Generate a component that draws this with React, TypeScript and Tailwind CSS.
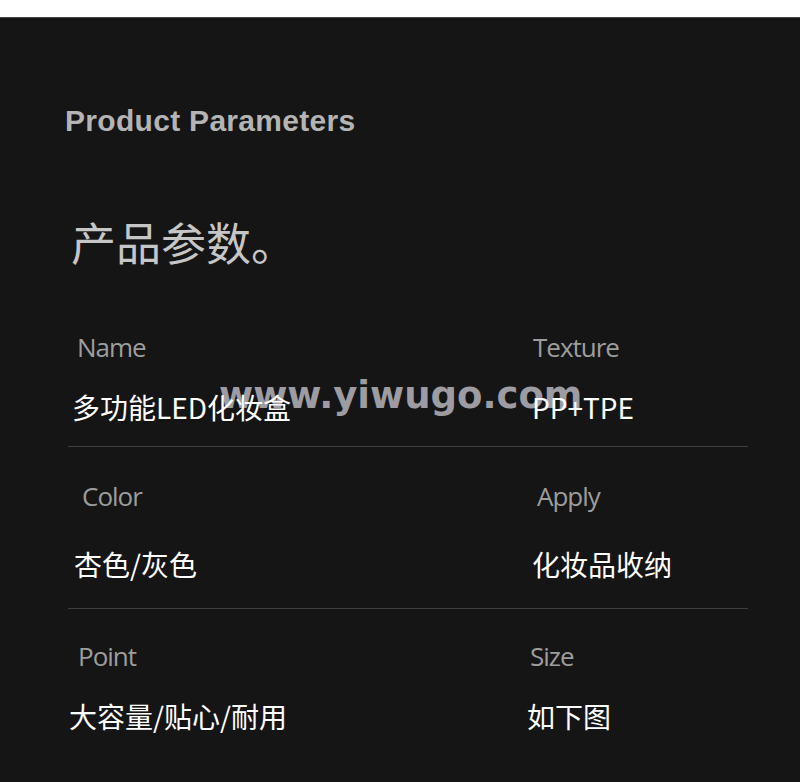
import React from "react";

const labelFont = { fontFamily: '"Open Sans", "Liberation Sans", sans-serif' };
const cjkFont = { fontFamily: '"Noto Sans CJK SC", "Noto Sans", sans-serif' };

type Cell = { label: string; value: string; lp: string; vp: string };

function Row({
  left,
  right,
  gapClass,
}: {
  left: Cell;
  right: Cell;
  gapClass: string;
}) {
  return (
    <div className="grid grid-cols-[459px_1fr]">
      <div className={`text-[26px] leading-none tracking-[-1px] text-[#9d9d9d] ${left.lp}`} style={labelFont}>
        {left.label}
      </div>
      <div className={`text-[26px] leading-none tracking-[-1px] text-[#9d9d9d] ${right.lp}`} style={labelFont}>
        {right.label}
      </div>
      <div
        className={`relative z-10 ${gapClass} text-[28px] leading-none text-white whitespace-nowrap ${left.vp}`}
        style={cjkFont}
      >
        {left.value}
      </div>
      <div
        className={`relative z-10 ${gapClass} text-[28px] leading-none text-white whitespace-nowrap ${right.vp}`}
        style={cjkFont}
      >
        {right.value}
      </div>
    </div>
  );
}

export default function App() {
  return (
    <div className="relative w-[800px] h-[782px] overflow-hidden bg-white flex flex-col">
      <div className="h-[17px] bg-white shrink-0" />
      <div className="flex-1 bg-[#151515] border-t border-[#474747] pt-[88px] pl-[65px]">
        <div
          className="text-[30px] leading-none font-bold text-[#b4b4b4] tracking-[0.3px]"
          style={{ fontFamily: '"Liberation Sans", Arial, sans-serif' }}
        >
          Product Parameters
        </div>
        <div className="mt-[83px] ml-[6px] text-[45px] leading-none text-[#c6c6c6]" style={cjkFont}>
          产品参数。
        </div>

        <div className="mt-[70px] ml-[3px] w-[680px]">
          <Row
            gapClass="mt-[33px]"
            left={{ label: "Name", value: "多功能LED化妆盒", lp: "pl-[9px]", vp: "pl-[4px]" }}
            right={{ label: "Texture", value: "PP+TPE", lp: "pl-[6px]", vp: "pl-[5px]" }}
          />
          <div className="mt-[25px] h-px bg-[#3e3e3e]" />

          <div className="mt-[36px]">
            <Row
              gapClass="mt-[41px]"
              left={{ label: "Color", value: "杏色/灰色", lp: "pl-[14px]", vp: "pl-[6px]" }}
              right={{ label: "Apply", value: "化妆品收纳", lp: "pl-[10px]", vp: "pl-[5px]" }}
            />
          </div>
          <div className="mt-[30px] h-px bg-[#3e3e3e]" />

          <div className="mt-[34px]">
            <Row
              gapClass="mt-[33px]"
              left={{ label: "Point", value: "大容量/贴心/耐用", lp: "pl-[10px]", vp: "pl-[1px]" }}
              right={{ label: "Size", value: "如下图", lp: "pl-[3px]", vp: "pl-0" }}
            />
          </div>
        </div>
      </div>

      <div
        className="absolute left-[219px] top-[377px] text-[37px] leading-none font-bold text-[#9c9ca2] whitespace-nowrap"
        style={{ fontFamily: '"DejaVu Sans", Verdana, sans-serif' }}
      >
        www.yiwugo.com
      </div>
    </div>
  );
}
